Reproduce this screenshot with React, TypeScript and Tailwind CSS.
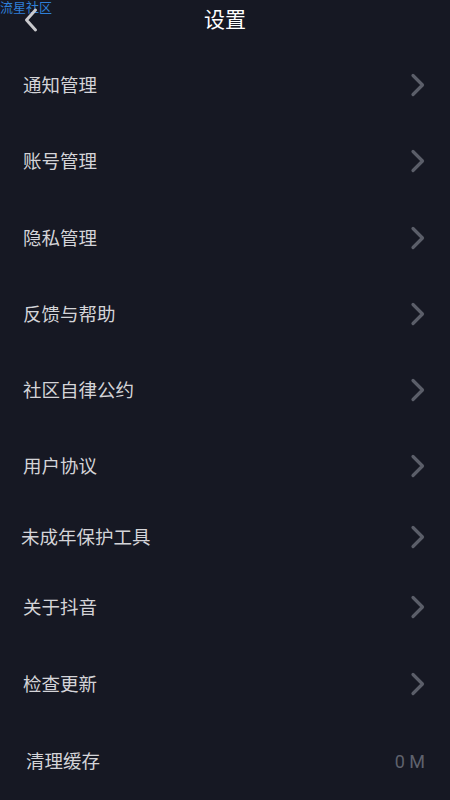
import React from 'react'

const rows = [
  { label: '通知管理', h: 'h-[76px]', pl: 'pl-[23px]' },
  { label: '账号管理', h: 'h-[76px]', pl: 'pl-[23px]' },
  { label: '隐私管理', h: 'h-[77px]', pl: 'pl-[23px]' },
  { label: '反馈与帮助', h: 'h-[76px]', pl: 'pl-[23px]' },
  { label: '社区自律公约', h: 'h-[76px]', pl: 'pl-[23px]' },
  { label: '用户协议', h: 'h-[76px]', pl: 'pl-[23px]' },
  { label: '未成年保护工具', h: 'h-[66px]', pl: 'pl-[21px]' },
  { label: '关于抖音', h: 'h-[74px]', pl: 'pl-[23px]' },
  { label: '检查更新', h: 'h-[80px]', pl: 'pl-[23px]' },
]

const Chevron = () => (
  <svg width="16" height="24" viewBox="0 0 16 24" fill="none">
    <path d="M3 2.5 L12.5 12 L3 21.5" stroke="#5b5e69" strokeWidth="3.2" strokeLinecap="round" strokeLinejoin="round" />
  </svg>
)

const App = () => {
  return (
    <div className="w-[450px] h-[800px] bg-[#161823] overflow-hidden relative font-['Noto_Sans_CJK_SC','Noto_Sans',sans-serif]">
      <div className="absolute left-0 top-0 text-[13px] leading-[14px] text-[#2f7fd6]">流星社区</div>

      <div className="h-[47px] relative flex justify-center">
        <svg className="absolute left-[22px] top-[7px]" width="18" height="26" viewBox="0 0 18 26" fill="none">
          <path d="M13.5 3 L4.5 13 L13.5 23" stroke="#c9c9cd" strokeWidth="3" strokeLinecap="round" strokeLinejoin="round" />
        </svg>
        <div className="pt-[3px] text-[21px] leading-[30px] text-white">设置</div>
      </div>

      {rows.map((r) => (
        <div key={r.label} className={`${r.h} ${r.pl} pr-[24px] flex items-center justify-between`}>
          <span className="text-[18.5px] text-[#d4d4d8]">{r.label}</span>
          <Chevron />
        </div>
      ))}

      <div className="h-[74px] pl-[26px] pr-[25px] flex items-center justify-between">
        <span className="text-[18.5px] text-[#d4d4d8]">清理缓存</span>
        <span className="text-[18px] text-[#5f626d] font-['Roboto',sans-serif]">0 M</span>
      </div>
    </div>
  )
}

export default App
